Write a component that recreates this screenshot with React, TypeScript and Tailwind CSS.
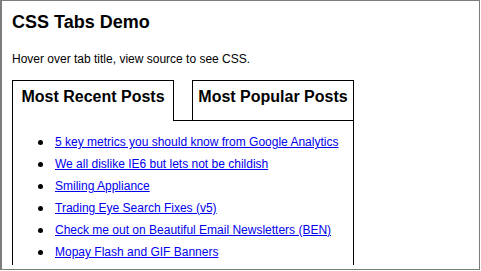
export default function App() {
  const posts = [
    '5 key metrics you should know from Google Analytics',
    'We all dislike IE6 but lets not be childish',
    'Smiling Appliance',
    'Trading Eye Search Fixes (v5)',
    'Check me out on Beautiful Email Newsletters (BEN)',
    'Mopay Flash and GIF Banners',
  ];

  return (
    <div className="w-[481px] h-[271px] bg-white" style={{ fontFamily: '"Liberation Sans", Arial, sans-serif' }}>
      <div className="w-[480px] h-[270px] border-t border-r border-b border-l-2 border-[#7c7c7c] overflow-hidden pl-[10px] text-black">
        <h1 className="mt-[11px] text-[18px] leading-[21px] font-bold">CSS Tabs Demo</h1>
        <p className="mt-[19px] text-[12px] leading-[15px]">Hover over tab title, view source to see CSS.</p>

        {/* tabs */}
        <div className="mt-[13px] flex w-[342px]">
          <div className="w-[162px] h-[41px] border-t border-x border-black text-center pt-[6px] text-[16px] leading-[19px] font-bold">
            Most Recent Posts
          </div>
          <div className="w-[18px] h-[41px] border-b border-black" />
          <div className="w-[162px] h-[41px] border border-black text-center pt-[6px] text-[16px] leading-[19px] font-bold">
            Most Popular Posts
          </div>
        </div>

        {/* tab content */}
        <div className="w-[342px] h-[144px] border-x border-black pt-[10px]">
          <ul>
            {posts.map((p) => (
              <li key={p} className="flex items-center h-[22px] text-[12px] leading-[22px]">
                <span className="ml-[25px] w-[5px] h-[5px] rounded-full bg-black shrink-0" />
                <a href="#" className="ml-[12px] text-[#0000ee] underline whitespace-nowrap">
                  {p}
                </a>
              </li>
            ))}
          </ul>
        </div>
      </div>
    </div>
  );
}
